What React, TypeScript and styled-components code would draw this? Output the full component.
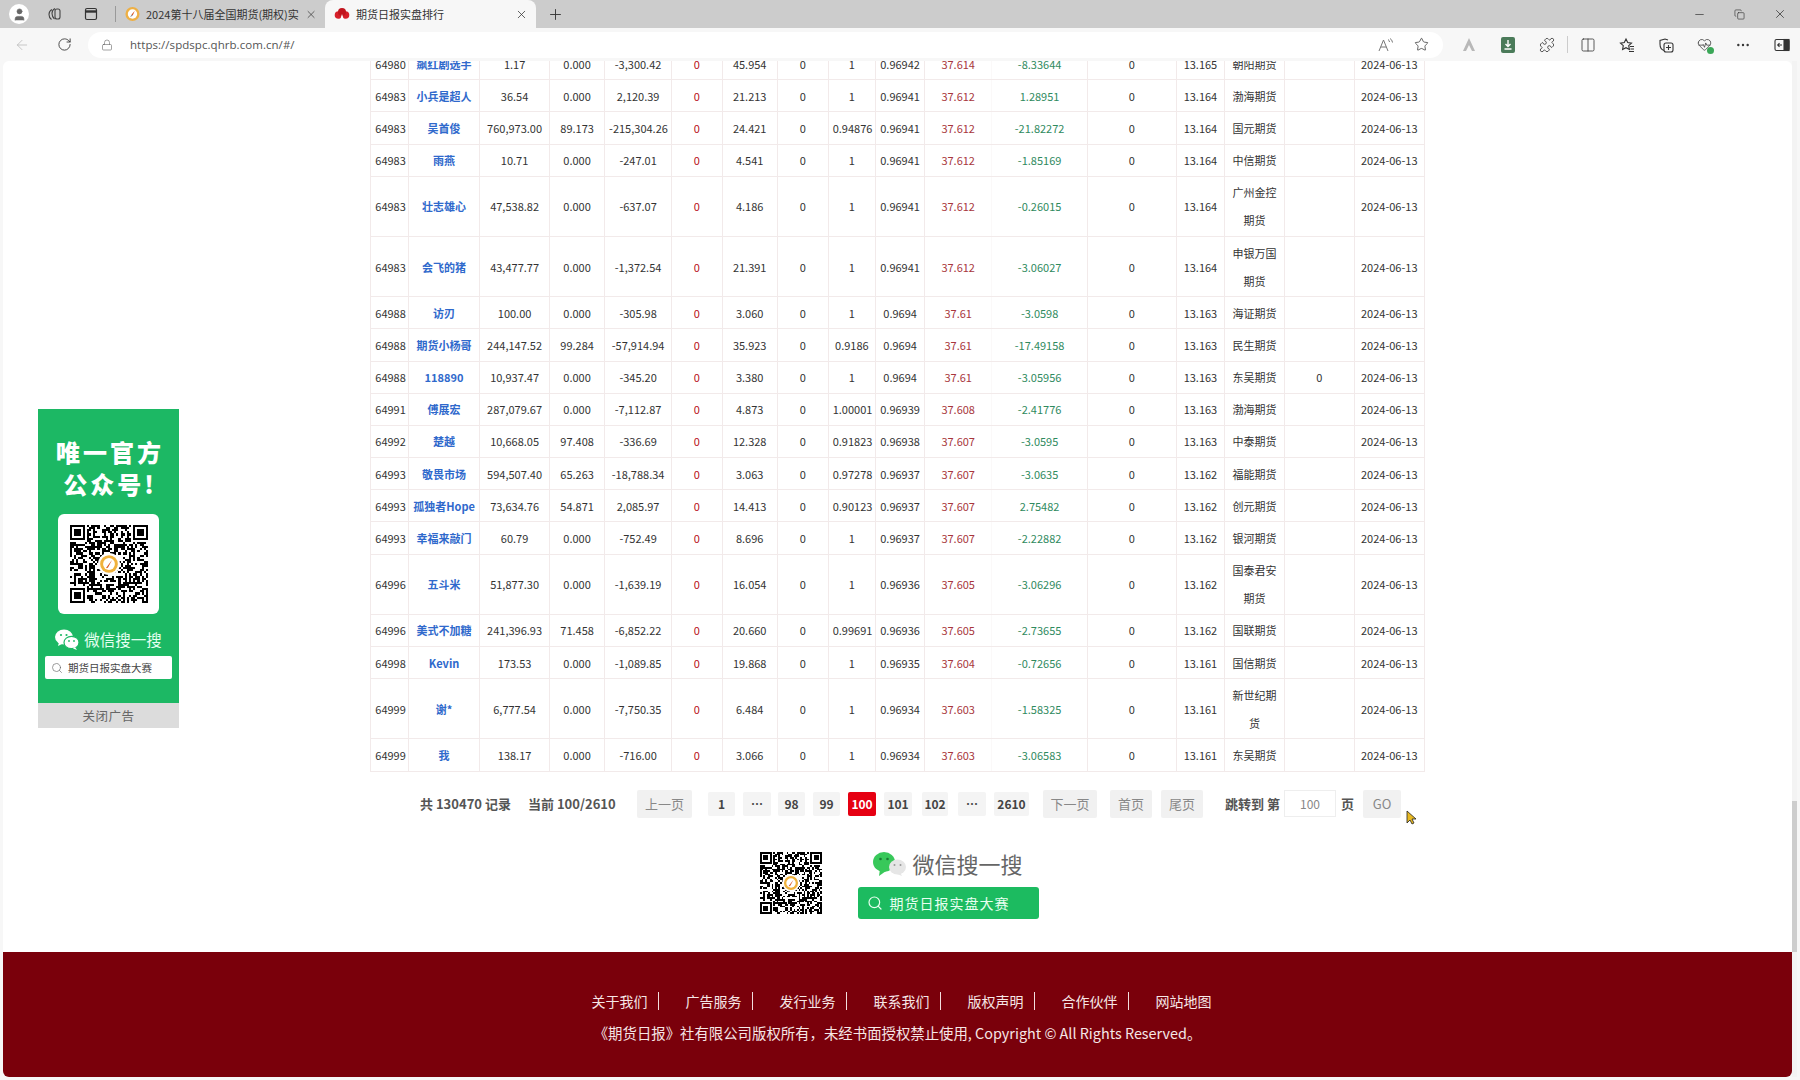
import React from "react";
import styled, { createGlobalStyle } from "styled-components";
import {
  ArrowLeft, RotateCw, Lock, Star, Plus, X, Minus, Copy, MoreHorizontal, Search, Puzzle, HeartPulse,
  Columns2, User,
} from "lucide-react";

const FONT = `"Noto Sans CJK SC", "Liberation Sans", sans-serif`;

const Global = createGlobalStyle`
  html, body { margin: 0; padding: 0; height: 100%; background: #f7f7f7; }
  body { font-family: ${FONT}; overflow: hidden; }
  * { box-sizing: border-box; }
`;

const Shell = styled.div`
  width: 1800px;
  height: 1080px;
  display: flex;
  flex-direction: column;
  background: #f7f7f7;
  overflow: hidden;
  position: relative;
`;

const TabBar = styled.div`
  height: 28px;
  flex: none;
  background: #cccccc;
  display: flex;
  align-items: stretch;
`;
const Slot = styled.div<{ $w: number }>`
  width: ${(p) => p.$w}px;
  flex: none;
  display: flex;
  align-items: center;
  justify-content: center;
  color: #333;
`;
const Avatar = styled.div`
  width: 20px;
  height: 20px;
  border-radius: 50%;
  background: #fff;
  color: #666;
  display: flex;
  align-items: center;
  justify-content: center;
`;
const TabSep = styled.div`
  width: 1px;
  height: 16px;
  background: #999;
  align-self: center;
  margin: 0 2px;
  flex: none;
`;
const Tab = styled.div<{ $active?: boolean; $w: number; $pad: number }>`
  width: ${(p) => p.$w}px;
  flex: none;
  display: flex;
  align-items: center;
  gap: 6px;
  padding: 0 8px 0 ${(p) => p.$pad}px;
  font-size: 11px;
  color: #333;
  background: ${(p) => (p.$active ? "#f7f7f7" : "transparent")};
  border-radius: ${(p) => (p.$active ? "8px 8px 0 0" : "0")};
`;
const TabTitle = styled.span`
  flex: 1;
  white-space: nowrap;
`;
const WindowControls = styled.div`
  margin-left: auto;
  display: flex;
`;

const Toolbar = styled.div`
  height: 33px;
  flex: none;
  display: flex;
  align-items: center;
  color: #444;
`;
const AddressPill = styled.div`
  width: 1355px;
  height: 26px;
  flex: none;
  background: #fff;
  border-radius: 13px;
  display: flex;
  align-items: center;
  margin-right: 7px;
`;
const UrlText = styled.span`
  font-size: 11.5px;
  color: #555;
  margin-left: 5px;
  flex: 1;
  font-family: "Open Sans", sans-serif;
  letter-spacing: 0.05px;
`;
const ToolSep = styled.div`
  width: 3px;
  height: 17px;
  flex: none;
  border-left: 1px solid #ccc;
  margin-left: 1px;
  margin-right: -1px;
`;
const BadgeWrap = styled.div`
  position: relative;
  display: flex;
`;
const GreenDot = styled.span`
  position: absolute;
  right: -2px;
  bottom: -2px;
  width: 7px;
  height: 7px;
  border-radius: 50%;
  background: #3aa757;
`;

const PageFrame = styled.div`
  flex: 1;
  min-height: 0;
  display: flex;
  padding: 0 3px 3px 3px;
`;
const Viewport = styled.div`
  flex: 1;
  min-width: 0;
  background: #fff;
  border-radius: 6px;
  overflow: hidden;
  display: flex;
  flex-direction: column;
`;
const Scrollbar = styled.div`
  width: 5px;
  flex: none;
  background: #f3f3f3;
  display: flex;
  flex-direction: column;
  padding-top: 740px;
`;
const Thumb = styled.div`
  height: 151px;
  background: #cdcdcd;
`;

const DataTable = styled.table`
  table-layout: fixed;
  width: 1053.6px;
  margin: -14px auto 0;
  border-collapse: collapse;
  font-size: 11px;
  color: #333;
  flex: none;
`;
const Col = styled.col<{ $w: number }>`
  width: ${(p) => p.$w}px;
`;
const Td = styled.td<{ $tone?: string; $faint?: boolean }>`
  border: 1px solid #f2eaea;
  padding: 1.6px 4px;
  line-height: 28px;
  text-align: center;
  color: ${(p) => p.$tone || "#333"};
  ${(p) => (p.$faint ? "border-right-color: #fbf9f9;" : "")}
`;
const NameLink = styled.a`
  color: #2f69cc;
  font-weight: 700;
  text-decoration: none;
  white-space: nowrap;
`;

const Pager = styled.div`
  margin-top: 18px;
  height: 28px;
  flex: none;
  padding-left: 417px;
  display: flex;
  align-items: center;
  font-size: 13px;
  color: #555;
  position: relative;
`;
const PagerInfo = styled.span<{ $w: number; $ml?: number }>`
  width: ${(p) => p.$w}px;
  margin-left: ${(p) => p.$ml || 0}px;
  flex: none;
  font-weight: 700;
  white-space: nowrap;
`;
const ActionBtn = styled.div<{ $w: number; $ml: number }>`
  width: ${(p) => p.$w}px;
  margin-left: ${(p) => p.$ml}px;
  height: 28px;
  flex: none;
  background: #f1f1f1;
  border-radius: 2px;
  color: #888;
  display: flex;
  align-items: center;
  justify-content: center;
`;
const PageNum = styled.div<{ $w: number; $ml: number; $on?: boolean }>`
  width: ${(p) => p.$w}px;
  margin-left: ${(p) => p.$ml}px;
  height: 24px;
  flex: none;
  background: ${(p) => (p.$on ? "#e60012" : "#f4f4f4")};
  color: ${(p) => (p.$on ? "#fff" : "#444")};
  font-weight: 700;
  font-size: 12px;
  border-radius: 2px;
  display: flex;
  align-items: center;
  justify-content: center;
`;
const JumpInput = styled.div`
  width: 52px;
  height: 27px;
  margin: 0 5px 0 6px;
  flex: none;
  align-self: flex-start;
  border: 1px solid #eee;
  color: #888;
  font-size: 12px;
  display: flex;
  align-items: center;
  justify-content: center;
`;
const Cursor = styled.svg`
  position: absolute;
  left: 1403px;
  top: 20px;
`;

const Promo = styled.div`
  margin-top: 34px;
  flex: none;
  display: flex;
  justify-content: center;
  gap: 36px;
  padding-left: 3px;
`;
const PromoRight = styled.div`
  width: 181px;
  display: flex;
  flex-direction: column;
  align-items: stretch;
`;
const PromoHead = styled.div`
  height: 35px;
  display: flex;
  align-items: flex-start;
  gap: 7px;
  padding-left: 15px;
  font-size: 22px;
  line-height: 23px;
  color: #666;
`;
const PromoButton = styled.div`
  height: 32px;
  background: #1cbb60;
  border-radius: 3px;
  display: flex;
  align-items: center;
  gap: 7px;
  padding-left: 9px;
  color: #e8fff0;
  font-size: 14px;
  letter-spacing: 1px;
`;

const Footer = styled.footer`
  margin-top: 33px;
  flex: 1;
  background: #7a000b;
  color: #f6e6e6;
  font-size: 14px;
  display: flex;
  flex-direction: column;
  align-items: center;
  padding-top: 37px;
`;
const FootLinks = styled.div`
  display: flex;
  line-height: 24px;
  padding-left: 8px;
`;
const FootLink = styled.span<{ $sep?: boolean }>`
  padding-right: ${(p) => (p.$sep ? 11 : 0)}px;
  margin-right: ${(p) => (p.$sep ? 27 : 0)}px;
  position: relative;
  white-space: nowrap;
  &::after {
    content: ${(p) => (p.$sep ? '""' : "none")};
    position: absolute;
    right: 0;
    top: 3px;
    height: 18px;
    width: 1px;
    background: #f2dede;
  }
`;
const Copyright = styled.div`
  margin-top: 8px;
  line-height: 24px;
  font-size: 14.4px;
  white-space: nowrap;
`;

const FloatAd = styled.aside`
  position: absolute;
  left: 38px;
  top: 409px;
  width: 141px;
  display: flex;
  flex-direction: column;
`;
const AdBody = styled.div`
  height: 294px;
  background: #1cb864;
  color: #fff;
  display: flex;
  flex-direction: column;
  align-items: center;
  padding-top: 27px;
`;
const AdTitle = styled.div`
  font-size: 24px;
  line-height: 32px;
  font-weight: 900;
  letter-spacing: 3px;
  text-align: center;
  margin-right: -3px;
`;
const AdQr = styled.div`
  margin-top: 14px;
  width: 101px;
  height: 100px;
  background: #fff;
  border-radius: 6px;
  display: flex;
  align-items: center;
  justify-content: center;
`;
const AdWeChat = styled.div`
  margin-top: 13px;
  height: 24px;
  display: flex;
  align-items: center;
  gap: 5px;
  font-size: 15.5px;
  color: #e4fff0;
`;
const AdSearch = styled.div`
  margin-top: 5px;
  width: 127px;
  height: 23px;
  background: #fff;
  border-radius: 2px;
  display: flex;
  align-items: center;
  gap: 5px;
  padding-left: 6px;
  font-size: 10.5px;
  color: #444;
`;
const AdClose = styled.div`
  height: 25px;
  background: #dcdcdc;
  color: #666;
  font-size: 12.5px;
  letter-spacing: 0.5px;
  display: flex;
  align-items: center;
  justify-content: center;
`;

function makeQr(): string {
  const n = 37;
  let seed = 20240613;
  const rnd = () => {
    seed = (seed * 1664525 + 1013904223) >>> 0;
    return (seed >>> 16) / 65535;
  };
  let d = "";
  const inFinder = (x: number, y: number) =>
    (x < 8 && y < 8) || (x >= n - 8 && y < 8) || (x < 8 && y >= n - 8);
  for (let y = 0; y < n; y++) {
    for (let x = 0; x < n; x++) {
      if (!inFinder(x, y) && rnd() > 0.5) d += `M${x} ${y}h1v1h-1z`;
    }
  }
  const finder = (x: number, y: number) =>
    `M${x} ${y}h7v7h-7zM${x + 1} ${y + 1}v5h5v-5zM${x + 2} ${y + 2}h3v3h-3z`;
  d += finder(0, 0) + finder(n - 7, 0) + finder(0, n - 7);
  return d;
}
const QR_PATH = makeQr();

function QrCode({ size }: { size: number }) {
  return (
    <svg width={size} height={size} viewBox="0 0 37 37" shapeRendering="crispEdges">
      <path d={QR_PATH} fill="#000" fillRule="evenodd" />
      <g shapeRendering="auto">
        <circle cx="18.5" cy="18.5" r="5.2" fill="#fff" />
        <circle cx="18.5" cy="18.5" r="4.2" fill="#f0b23c" />
        <circle cx="18.5" cy="18.5" r="2.8" fill="#fff" />
        <path d="M20 16.5l-3 4 1-.2z" fill="#d9541e" />
      </g>
    </svg>
  );
}

function WeChatWhite() {
  return (
    <svg width="24" height="21" viewBox="0 0 24 21">
      <ellipse cx="9" cy="8" rx="9" ry="7.6" fill="#fff" />
      <path d="M4 13l-1 4 5-2.5z" fill="#fff" />
      <ellipse cx="16.5" cy="13.5" rx="7.5" ry="6.2" fill="#fff" stroke="#1cb864" strokeWidth="1.2" />
      <path d="M20 18l2 3-4-1.6z" fill="#fff" />
      <circle cx="6" cy="6" r="1.1" fill="#1cb864" />
      <circle cx="11.5" cy="6" r="1.1" fill="#1cb864" />
      <circle cx="14" cy="12" r="0.9" fill="#1cb864" />
      <circle cx="19" cy="12" r="0.9" fill="#1cb864" />
    </svg>
  );
}

function WeChatColor() {
  return (
    <svg width="33" height="25" viewBox="0 0 33 25">
      <ellipse cx="11" cy="10" rx="11" ry="10" fill="#38c85a" />
      <path d="M7 17l-1 7 7-5z" fill="#38c85a" />
      <ellipse cx="24.5" cy="15" rx="8.5" ry="7.4" fill="#e6e6e6" />
      <path d="M27 20l2 4-5-2z" fill="#e6e6e6" />
      <circle cx="7.5" cy="7" r="1.3" fill="#1a7a35" />
      <circle cx="14.5" cy="7" r="1.3" fill="#1a7a35" />
      <circle cx="21.5" cy="13" r="1" fill="#999" />
      <circle cx="27.5" cy="13" r="1" fill="#999" />
    </svg>
  );
}

function CompassIcon() {
  return (
    <svg width="16" height="16" viewBox="0 0 16 16">
      <circle cx="8" cy="8" r="7.5" fill="#eeb045" />
      <circle cx="8" cy="8" r="5" fill="#fff" />
      <path d="M10.5 4.5L7 8.5l1.2 1z" fill="#d9541e" />
      <path d="M5.5 11.5L7 8.5l1.2 1z" fill="#888" />
    </svg>
  );
}
function CloudIcon() {
  return (
    <svg width="16" height="14" viewBox="0 0 16 14">
      <circle cx="4.5" cy="8" r="3.8" fill="#d6202a" />
      <circle cx="11.5" cy="8" r="3.8" fill="#d6202a" />
      <circle cx="8" cy="5" r="4" fill="#c2161f" />
      <path d="M8 7l-2 6h4z" fill="#fff" />
    </svg>
  );
}
function TabActions() {
  return (
    <svg width="16" height="16" viewBox="0 0 16 16" fill="none" stroke="#444" strokeWidth="1.1">
      <path d="M6 3.5a5.5 5.5 0 0 0-3 5c0 2 1 4 2.5 5" />
      <path d="M9 2.5a5.5 5.5 0 0 0-3 5c0 2 1 4 2.5 5.5" />
      <rect x="9" y="3" width="5" height="10" rx="2" />
    </svg>
  );
}
function TabStrip() {
  return (
    <svg width="14" height="14" viewBox="0 0 14 14" fill="none" stroke="#333" strokeWidth="1.2">
      <rect x="1.5" y="1.5" width="11" height="11" rx="1.5" />
      <path d="M1.5 4.5h11" strokeWidth="2.4" />
    </svg>
  );
}
function ReadAloud() {
  return (
    <svg width="16" height="14" viewBox="0 0 16 14" fill="none" stroke="#777" strokeWidth="1">
      <path d="M1 13L5.5 2 10 13M2.8 9h5.4" />
      <path d="M10 1.5a3 3 0 0 1 1.5 2.5M12 0.5a5 5 0 0 1 2.5 4" />
    </svg>
  );
}
function FavList() {
  return (
    <svg width="16" height="16" viewBox="0 0 16 16" fill="none" stroke="#333" strokeWidth="1.1">
      <path d="M7 2l1.7 3.6 3.8.5-2.8 2.6.7 3.8L7 10.7l-3.4 1.8.7-3.8L1.5 6.1l3.8-.5z" />
      <path d="M11 9.5h4M11.5 12h3.5M10 14.5h5" />
    </svg>
  );
}
function Collections() {
  return (
    <svg width="16" height="16" viewBox="0 0 16 16" fill="none" stroke="#333" strokeWidth="1.1">
      <path d="M6 13.5C3 12.5 2 10 2 7V3.5l5-1.5 3 1" />
      <rect x="6" y="6" width="9" height="9" rx="2" />
      <path d="M10.5 8v5M8 10.5h5" />
    </svg>
  );
}
function Sidebar() {
  return (
    <svg width="16" height="14" viewBox="0 0 16 14" fill="none" stroke="#333" strokeWidth="1.1">
      <rect x="1" y="1.5" width="14" height="11" rx="1.5" />
      <rect x="10" y="1.5" width="5" height="11" fill="#333" />
      <path d="M8 7H4M5.5 5.2L3.7 7l1.8 1.8" />
    </svg>
  );
}
function Download() {
  return (
    <svg width="14" height="16" viewBox="0 0 14 16">
      <rect width="14" height="16" rx="2" fill="#4b7b5a" />
      <path d="M7 3v6M4.5 7L7 9.5 9.5 7M3.5 12h7" stroke="#fff" strokeWidth="1.4" fill="none" />
    </svg>
  );
}
function LambdaMark() {
  return (
    <svg width="14" height="15" viewBox="0 0 14 15">
      <path d="M7 1L1 14h3l3-6 3 6h3z" fill="#b8b8b8" />
    </svg>
  );
}

const WIDTHS = [37.8, 71, 70, 55, 67, 50.6, 55, 51, 47.4, 49, 67.2, 95.7, 88.9, 48.2, 59.9, 69.9, 69.9];

type Row = [string, string, string, string, string, string, string, string, string, string, string, string, string?];
const ROWS: Row[] = [
  ["64980", "飙红剧选手", "1.17", "0.000", "-3,300.42", "45.954", "1", "0.96942", "37.614", "-8.33644", "13.165", "朝阳期货"],
  ["64983", "小兵是超人", "36.54", "0.000", "2,120.39", "21.213", "1", "0.96941", "37.612", "1.28951", "13.164", "渤海期货"],
  ["64983", "吴首俊", "760,973.00", "89.173", "-215,304.26", "24.421", "0.94876", "0.96941", "37.612", "-21.82272", "13.164", "国元期货"],
  ["64983", "雨燕", "10.71", "0.000", "-247.01", "4.541", "1", "0.96941", "37.612", "-1.85169", "13.164", "中信期货"],
  ["64983", "壮志雄心", "47,538.82", "0.000", "-637.07", "4.186", "1", "0.96941", "37.612", "-0.26015", "13.164", "广州金控期货"],
  ["64983", "会飞的猪", "43,477.77", "0.000", "-1,372.54", "21.391", "1", "0.96941", "37.612", "-3.06027", "13.164", "申银万国期货"],
  ["64988", "访刃", "100.00", "0.000", "-305.98", "3.060", "1", "0.9694", "37.61", "-3.0598", "13.163", "海证期货"],
  ["64988", "期货小杨哥", "244,147.52", "99.284", "-57,914.94", "35.923", "0.9186", "0.9694", "37.61", "-17.49158", "13.163", "民生期货"],
  ["64988", "118890", "10,937.47", "0.000", "-345.20", "3.380", "1", "0.9694", "37.61", "-3.05956", "13.163", "东吴期货", "0"],
  ["64991", "傅展宏", "287,079.67", "0.000", "-7,112.87", "4.873", "1.00001", "0.96939", "37.608", "-2.41776", "13.163", "渤海期货"],
  ["64992", "楚越", "10,668.05", "97.408", "-336.69", "12.328", "0.91823", "0.96938", "37.607", "-3.0595", "13.163", "中泰期货"],
  ["64993", "敬畏市场", "594,507.40", "65.263", "-18,788.34", "3.063", "0.97278", "0.96937", "37.607", "-3.0635", "13.162", "福能期货"],
  ["64993", "孤独者Hope", "73,634.76", "54.871", "2,085.97", "14.413", "0.90123", "0.96937", "37.607", "2.75482", "13.162", "创元期货"],
  ["64993", "幸福来敲门", "60.79", "0.000", "-752.49", "8.696", "1", "0.96937", "37.607", "-2.22882", "13.162", "银河期货"],
  ["64996", "五斗米", "51,877.30", "0.000", "-1,639.19", "16.054", "1", "0.96936", "37.605", "-3.06296", "13.162", "国泰君安期货"],
  ["64996", "美式不加糖", "241,396.93", "71.458", "-6,852.22", "20.660", "0.99691", "0.96936", "37.605", "-2.73655", "13.162", "国联期货"],
  ["64998", "Kevin", "173.53", "0.000", "-1,089.85", "19.868", "1", "0.96935", "37.604", "-0.72656", "13.161", "国信期货"],
  ["64999", "谢*", "6,777.54", "0.000", "-7,750.35", "6.484", "1", "0.96934", "37.603", "-1.58325", "13.161", "新世纪期货"],
  ["64999", "我", "138.17", "0.000", "-716.00", "3.066", "1", "0.96934", "37.603", "-3.06583", "13.161", "东吴期货"],
];

const RED = "#b80f18";
const DARKRED = "#a8363c";
const GREEN = "#2f8a5e";

const PAGES: { t: string; w: number; ml: number; on?: boolean }[] = [
  { t: "1", w: 27, ml: 16 },
  { t: "…", w: 28, ml: 8 },
  { t: "98", w: 27, ml: 7 },
  { t: "99", w: 27, ml: 8 },
  { t: "100", w: 28, ml: 8, on: true },
  { t: "101", w: 28, ml: 8 },
  { t: "102", w: 26, ml: 10 },
  { t: "…", w: 28, ml: 10 },
  { t: "2610", w: 35, ml: 8 },
];

const LINKS = ["关于我们", "广告服务", "发行业务", "联系我们", "版权声明", "合作伙伴", "网站地图"];

export default function App() {
  return (
    <Shell>
      <Global />
      <TabBar>
        <Slot $w={38}><Avatar><User size={15} fill="#666" strokeWidth={1} /></Avatar></Slot>
        <Slot $w={31}><TabActions /></Slot>
        <Slot $w={44}><TabStrip /></Slot>
        <TabSep />
        <Tab $w={207} $pad={7}>
          <CompassIcon />
          <TabTitle>2024第十八届全国期货(期权)实</TabTitle>
          <X size={13} strokeWidth={1.4} />
        </Tab>
        <Tab $w={211} $active $pad={9}>
          <CloudIcon />
          <TabTitle>期货日报实盘排行</TabTitle>
          <X size={13} strokeWidth={1.4} />
        </Tab>
        <Slot $w={38}><Plus size={17} strokeWidth={1.3} /></Slot>
        <WindowControls>
          <Slot $w={40}><Minus size={13} strokeWidth={1.3} /></Slot>
          <Slot $w={41}><Copy size={11} strokeWidth={1.4} /></Slot>
          <Slot $w={40}><X size={14} strokeWidth={1.3} /></Slot>
        </WindowControls>
      </TabBar>
      <Toolbar>
        <Slot $w={44}><ArrowLeft size={16} strokeWidth={1.2} color="#bbb" /></Slot>
        <Slot $w={40}><RotateCw size={15} strokeWidth={1.4} /></Slot>
        <Slot $w={4} />
        <AddressPill>
          <Slot $w={37}><Lock size={12} strokeWidth={1.2} color="#666" /></Slot>
          <UrlText>https://spdspc.qhrb.com.cn/#/</UrlText>
          <Slot $w={36}><ReadAloud /></Slot>
          <Slot $w={35}><Star size={15} strokeWidth={1.2} /></Slot>
          <Slot $w={4} />
        </AddressPill>
        <Slot $w={38.7}><LambdaMark /></Slot>
        <Slot $w={38.7}><Download /></Slot>
        <Slot $w={38.7}><Puzzle size={16} strokeWidth={1.2} /></Slot>
        <ToolSep />
        <Slot $w={38.7}><Columns2 size={16} strokeWidth={1.2} /></Slot>
        <Slot $w={38.7}><FavList /></Slot>
        <Slot $w={38.7}><Collections /></Slot>
        <Slot $w={38.7}>
          <BadgeWrap><HeartPulse size={15} strokeWidth={1.2} /><GreenDot /></BadgeWrap>
        </Slot>
        <Slot $w={38.7}><MoreHorizontal size={16} strokeWidth={1.6} /></Slot>
        <Slot $w={38.7}><Sidebar /></Slot>
      </Toolbar>
      <PageFrame>
        <Viewport>
          <DataTable>
            <colgroup>
              {WIDTHS.map((w, i) => <Col key={i} $w={w} />)}
            </colgroup>
            <tbody>
              {ROWS.map((r, i) => (
                <tr key={i}>
                  <Td>{r[0]}</Td>
                  <Td><NameLink>{r[1]}</NameLink></Td>
                  <Td>{r[2]}</Td>
                  <Td>{r[3]}</Td>
                  <Td>{r[4]}</Td>
                  <Td $tone={RED}>0</Td>
                  <Td>{r[5]}</Td>
                  <Td>0</Td>
                  <Td>{r[6]}</Td>
                  <Td>{r[7]}</Td>
                  <Td $tone={DARKRED} $faint>{r[8]}</Td>
                  <Td $tone={GREEN}>{r[9]}</Td>
                  <Td>0</Td>
                  <Td>{r[10]}</Td>
                  <Td>{r[11]}</Td>
                  <Td>{r[12] ?? ""}</Td>
                  <Td>2024-06-13</Td>
                </tr>
              ))}
            </tbody>
          </DataTable>
          <Pager>
            <PagerInfo $w={108}>共 130470 记录</PagerInfo>
            <PagerInfo $w={109}>当前 100/2610</PagerInfo>
            <ActionBtn $w={55} $ml={0}>上一页</ActionBtn>
            {PAGES.map((p, i) => (
              <PageNum key={i} $w={p.w} $ml={p.ml} $on={p.on}>{p.t}</PageNum>
            ))}
            <ActionBtn $w={54} $ml={14}>下一页</ActionBtn>
            <ActionBtn $w={42} $ml={13}>首页</ActionBtn>
            <ActionBtn $w={42} $ml={9}>尾页</ActionBtn>
            <PagerInfo $w={53} $ml={22}>跳转到 第</PagerInfo>
            <JumpInput>100</JumpInput>
            <PagerInfo $w={22}>页</PagerInfo>
            <ActionBtn $w={38} $ml={0}>GO</ActionBtn>
            <Cursor width="11" height="15" viewBox="0 0 11 15">
              <path d="M1 1v12l3-3 2 4 2-1-2-4h4z" fill="#e8b923" stroke="#222" strokeWidth="0.8" />
            </Cursor>
          </Pager>
          <Promo>
            <QrCode size={62} />
            <PromoRight>
              <PromoHead><WeChatColor />微信搜一搜</PromoHead>
              <PromoButton>
                <Search size={16} strokeWidth={1.8} />
                期货日报实盘大赛
              </PromoButton>
            </PromoRight>
          </Promo>
          <Footer>
            <FootLinks>
              {LINKS.map((l, i) => <FootLink key={l} $sep={i < LINKS.length - 1}>{l}</FootLink>)}
            </FootLinks>
            <Copyright>《期货日报》社有限公司版权所有，未经书面授权禁止使用, Copyright © All Rights Reserved。</Copyright>
          </Footer>
        </Viewport>
        <Scrollbar><Thumb /></Scrollbar>
      </PageFrame>
      <FloatAd>
        <AdBody>
          <AdTitle>唯一官方<br />公众号!</AdTitle>
          <AdQr><QrCode size={78} /></AdQr>
          <AdWeChat><WeChatWhite />微信搜一搜</AdWeChat>
          <AdSearch><Search size={12} strokeWidth={1.3} color="#666" />期货日报实盘大赛</AdSearch>
        </AdBody>
        <AdClose>关闭广告</AdClose>
      </FloatAd>
    </Shell>
  );
}
